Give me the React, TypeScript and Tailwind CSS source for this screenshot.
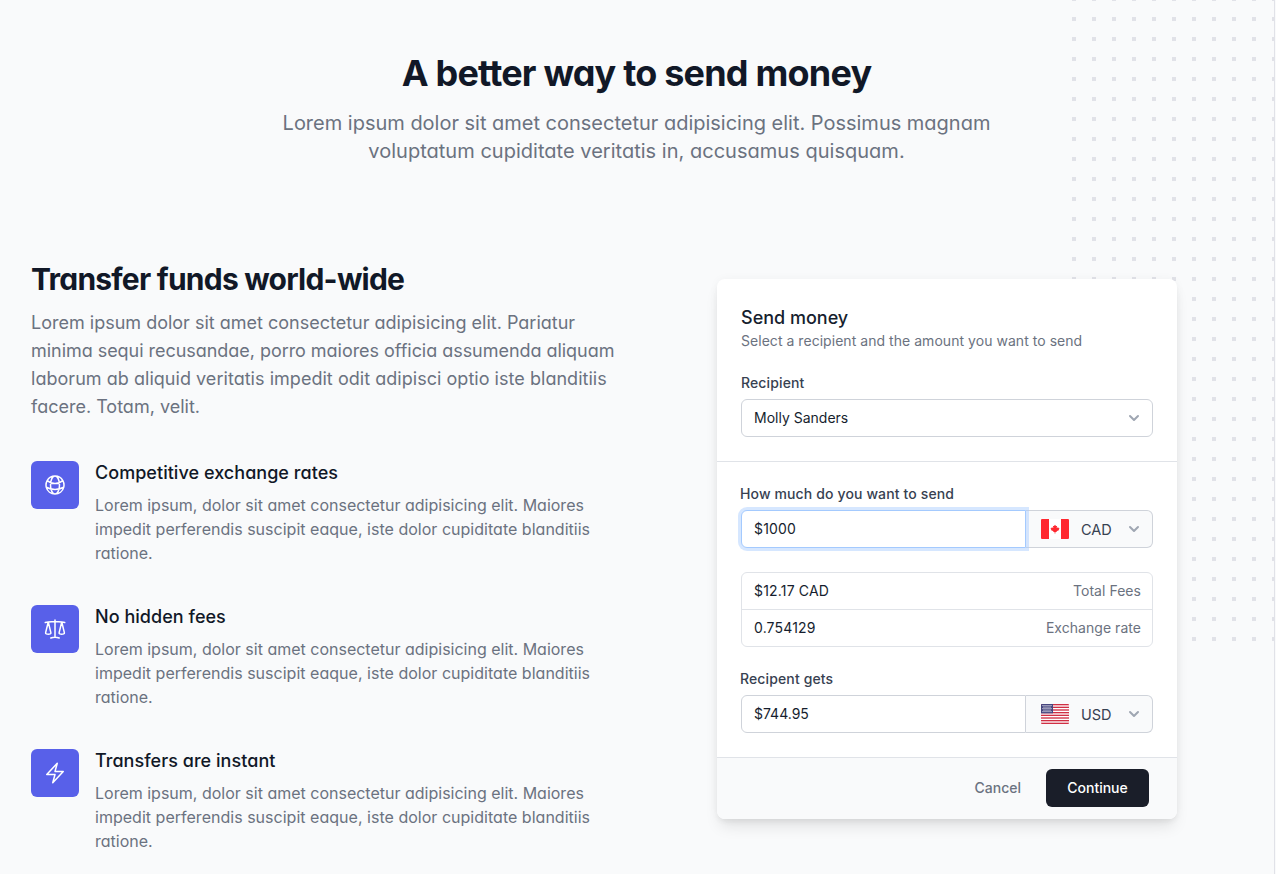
import React from "react";
import { HiOutlineBolt, HiOutlineGlobeAlt, HiOutlineScale } from "react-icons/hi2";

const features = [
  { title: "Competitive exchange rates", Icon: HiOutlineGlobeAlt },
  { title: "No hidden fees", Icon: HiOutlineScale },
  { title: "Transfers are instant", Icon: HiOutlineBolt },
];

function Chevron() {
  return (
    <svg viewBox="0 0 20 20" className="size-5 shrink-0" fill="#9fa6b2">
      <path
        fillRule="evenodd"
        clipRule="evenodd"
        d="M5.293 7.293a1 1 0 011.414 0L10 10.586l3.293-3.293a1 1 0 111.414 1.414l-4 4a1 1 0 01-1.414 0l-4-4a1 1 0 010-1.414z"
      />
    </svg>
  );
}

function CanadaFlag() {
  return (
    <svg viewBox="0 0 28 20" className="h-5 w-7 shrink-0">
      <rect width="28" height="20" rx="1" fill="#fff" />
      <path d="M1 0h7v20H1a1 1 0 01-1-1V1a1 1 0 011-1zM20 0h7a1 1 0 011 1v18a1 1 0 01-1 1h-7z" fill="#ff272f" />
      <path
        d="M14 5.7l-1 1.4-1.1-.2.5 2.2-1.6-.9-.3.9-1.1.3.9 1-.5.7 2.6 1.2-.1.8 1.3-.1v1.4h.8V13l1.3.1-.1-.8 2.6-1.2-.5-.7.9-1-1.1-.3-.3-.9-1.6.9.5-2.2-1.1.2z"
        fill="#ff272f"
      />
    </svg>
  );
}

function UsFlag() {
  const stripes = [0, 2.667, 5.333, 8, 10.667, 13.333, 16, 18.667];
  const stars: [number, number][] = [];
  for (let row = 0; row < 5; row++) {
    for (let col = 0; col < (row % 2 ? 4 : 5); col++) {
      stars.push([2 + col * 2 + (row % 2 ? 1 : 0), 1.6 + row * 1.5]);
    }
  }
  return (
    <svg viewBox="0 0 28 20" className="h-5 w-7 shrink-0">
      <clipPath id="us-flag">
        <rect width="28" height="20" rx="1" />
      </clipPath>
      <g clipPath="url(#us-flag)">
        <rect width="28" height="20" fill="#fff" />
        {stripes.map((y) => (
          <rect key={y} y={y} width="28" height="1.333" fill="#d02f44" />
        ))}
        <rect width="12" height="9.333" fill="#46467f" />
        {stars.map(([x, y]) => (
          <circle key={`${x}-${y}`} cx={x} cy={y} r="0.6" fill="#fff" />
        ))}
      </g>
    </svg>
  );
}

function Label({ children }: { children: React.ReactNode }) {
  return <div className="text-sm font-medium tracking-[0.13px] text-[#374151]">{children}</div>;
}

export default function App() {
  return (
    <div className="relative h-[874px] w-[1276px] overflow-hidden bg-[#f9fafb] font-['Inter',sans-serif] text-[#161e2e] [font-optical-sizing:none]">
      <svg className="absolute top-0 left-[1072px] h-[641px] w-[202px]">
        <defs>
          <pattern id="dots" x="0" y="17" width="20" height="20" patternUnits="userSpaceOnUse">
            <rect width="4" height="4" fill="#e1e2e8" />
          </pattern>
        </defs>
        <rect width="202" height="641" fill="url(#dots)" />
      </svg>
      <div className="absolute inset-y-0 left-[1274px] w-px bg-[#e1e2e8]" />

      <div className="relative w-[1273px] pt-[53px]">
        <header className="text-center [font-feature-settings:'cv11']">
          <h1 className="text-4xl leading-10 font-bold tracking-[-0.8px] text-[#111827]">A better way to send money</h1>
          <p className="mt-4 text-xl text-[#6b7280]">
            <span className="tracking-[-0.01px]">
              Lorem ipsum dolor sit amet consectetur adipisicing elit. Possimus magnam
            </span>
            <br />
            <span className="tracking-[0.02px]">voluptatum cupiditate veritatis in, accusamus quisquam.</span>
          </p>
        </header>

        <main className="flex pt-24 pl-[31px]">
          <section className="w-[686px] shrink-0 [font-feature-settings:'cv11']">
            <h2 className="text-3xl leading-9 font-bold tracking-[-0.77px] text-[#111827]">Transfer funds world-wide</h2>
            <p className="mt-3 text-lg leading-7 whitespace-nowrap text-[#6b7280]">
              Lorem ipsum dolor sit amet consectetur adipisicing elit. Pariatur
              <br />
              <span className="tracking-[-0.04px]">minima sequi recusandae, porro maiores officia assumenda aliquam</span>
              <br />
              <span className="tracking-[0.035px]">
                laborum ab aliquid veritatis impedit odit adipisci optio iste blanditiis
              </span>
              <br />
              facere. Totam, velit.
            </p>
            <ul className="mt-10 flex flex-col gap-10">
              {features.map(({ title, Icon }) => (
                <li key={title} className="flex gap-4">
                  <div className="flex size-12 shrink-0 items-center justify-center rounded-md bg-[#5860e9] text-white">
                    <Icon className="size-6" />
                  </div>
                  <div>
                    <h3 className="text-lg leading-6 font-medium tracking-[0.04px] text-[#111827]">{title}</h3>
                    <p className="mt-2 text-base leading-6 whitespace-nowrap text-[#6b7280]">
                      Lorem ipsum, dolor sit amet consectetur adipisicing elit. Maiores
                      <br />
                      <span className="tracking-[0.02px]">
                        impedit perferendis suscipit eaque, iste dolor cupiditate blanditiis
                      </span>
                      <br />
                      ratione.
                    </p>
                  </div>
                </li>
              ))}
            </ul>
          </section>

          <section className="mt-[18px] h-[540px] w-[460px] shrink-0 rounded-lg bg-white shadow-[0_10px_15px_-3px_rgba(0,0,0,0.1),0_4px_6px_-2px_rgba(0,0,0,0.05),0_0_10px_rgba(0,0,0,0.04)]">
            <div className="border-b border-[#e0e3e8] px-6 pt-[25px] pb-6">
              <h3 className="text-lg leading-[27px] font-medium">Send money</h3>
              <p className="text-sm tracking-[0.04px] text-[#6b7280]">Select a recipient and the amount you want to send</p>
              <div className="pt-[22px]">
                <Label>Recipient</Label>
                <div className="mt-1.5 flex h-[38px] items-center justify-between rounded-md border border-[#cfd3da] bg-white pr-2 pl-3 text-sm">
                  Molly Sanders
                  <Chevron />
                </div>
              </div>
            </div>

            <div className="px-6 pt-[22px] pb-6">
              <div className="-ml-px">
                <Label>How much do you want to send</Label>
              </div>
              <div className="mt-1.5 flex h-[38px] text-sm">
                <div className="z-10 flex w-[285px] items-center rounded-l-md border border-[#a4cafe] bg-white pl-3 tracking-[0.15px] shadow-[0_0_0_3px_rgba(164,202,254,0.45)]">
                  $1000
                </div>
                <div className="flex flex-1 items-center rounded-r-md border border-l-0 border-[#cfd3da] bg-[#f9fafb] pr-2 pl-[15px]">
                  <CanadaFlag />
                  <span className="mt-0.5 ml-3 flex-1 text-[14.5px] text-[#374151]">CAD</span>
                  <Chevron />
                </div>
              </div>

              <dl className="mt-6 rounded-md border border-[#e0e3e8] text-sm">
                <div className="flex h-9 items-center justify-between pr-[11px] pl-3">
                  <dd className="tracking-[0.18px]">$12.17 CAD</dd>
                  <dt className="tracking-[0.04px] text-[#6b7280]">Total Fees</dt>
                </div>
                <div className="flex h-[37px] items-center justify-between border-t border-[#e0e3e8] pr-[11px] pl-3">
                  <dd className="tracking-[0.15px]">0.754129</dd>
                  <dt className="tracking-[0.04px] text-[#6b7280]">Exchange rate</dt>
                </div>
              </dl>

              <div className="-ml-px pt-[22px]">
                <Label>Recipent gets</Label>
              </div>
              <div className="mt-1.5 flex h-[38px] text-sm">
                <div className="flex w-[285px] items-center rounded-l-md border border-[#cfd3da] bg-white pl-3">
                  $744.95
                </div>
                <div className="flex flex-1 items-center rounded-r-md border border-l-0 border-[#cfd3da] bg-[#f9fafb] pr-2 pl-[15px]">
                  <UsFlag />
                  <span className="mt-0.5 ml-3 flex-1 text-[14.5px] text-[#374151]">USD</span>
                  <Chevron />
                </div>
              </div>
            </div>

            <footer className="flex h-[62px] items-center justify-end gap-[25px] rounded-b-lg border-t border-[#e0e3e8] bg-[#f9fafb] pr-7 pb-[2px] text-sm font-medium">
              <button className="text-[#6b7280]">Cancel</button>
              <button className="h-[38px] w-[103px] rounded-md bg-[#1a1e29] text-white">Continue</button>
            </footer>
          </section>
        </main>
      </div>
    </div>
  );
}
